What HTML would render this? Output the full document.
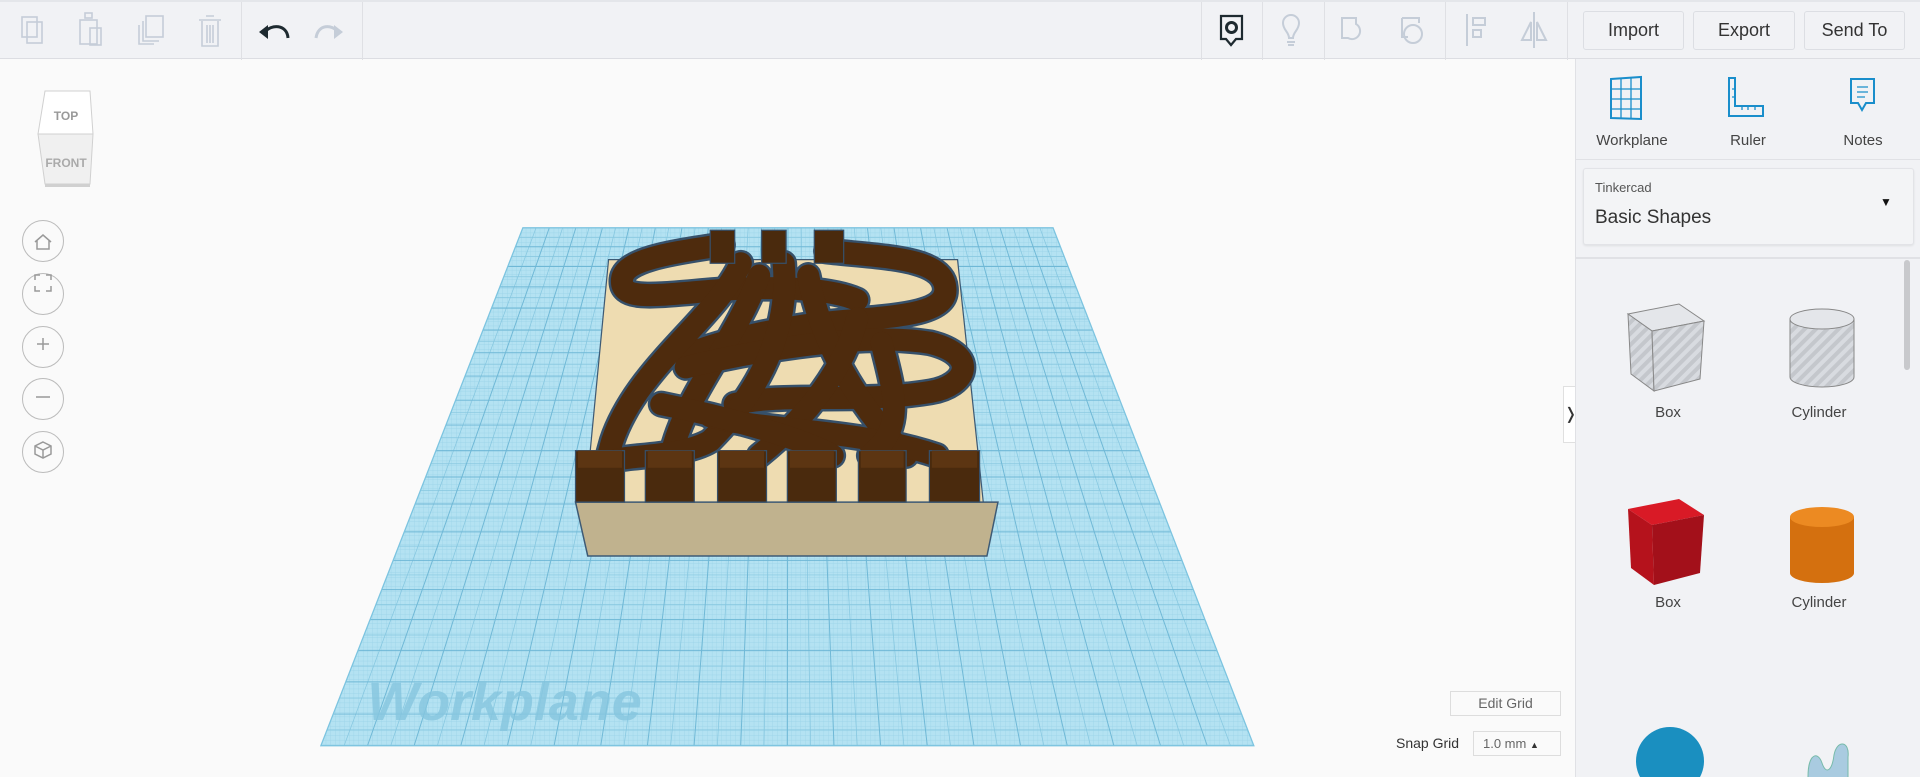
<!DOCTYPE html>
<html><head><meta charset="utf-8">
<style>
*{box-sizing:border-box;margin:0;padding:0}
body{width:1920px;height:777px;overflow:hidden;background:#fafafa;font-family:"Liberation Sans",sans-serif;position:relative}
#scene{position:absolute;left:0;top:0;width:1920px;height:777px}
#tb{position:absolute;left:0;top:0;width:1920px;height:59px;background:#f1f2f5;border-bottom:1px solid #dcdde2;border-top:2px solid #e4e6ea}
.sep{position:absolute;top:0;height:58px;width:1px;background:#dfe0e4}
.btn{position:absolute;top:9px;height:39px;border:1px solid #dcdee3;border-radius:3px;background:#f1f2f5;font-size:18px;color:#333;text-align:center;line-height:37px}
#panel{position:absolute;left:1575px;top:59px;width:345px;height:718px;background:#f1f2f5;border-left:1px solid #e0e1e5}
.lbl{position:absolute;font-size:15px;color:#444;text-align:center;width:120px}
.cb{position:absolute;left:22px;width:42px;height:42px;border:1px solid #bbb;border-radius:50%;background:#fafafa}
</style></head><body>

<svg id="scene" viewBox="0 0 1568 634.5" preserveAspectRatio="none">
<defs>
<clipPath id="wp"><polygon points="427,186 860,186 1024,609 262,609"/></clipPath>
<pattern id="fine" width="3.8" height="3.8" patternUnits="userSpaceOnUse"><path d="M0 0H3.8M0 0V3.8" stroke="#8fcde4" stroke-width="0.5" fill="none"/></pattern>
</defs>
<polygon points="427,186 860,186 1024,609 262,609" fill="#b4e2f2"/>
<polygon points="427,186 860,186 1024,609 262,609" fill="url(#fine)" opacity="0.8"/>
<g clip-path="url(#wp)" stroke="#86c7e0" stroke-width="0.6">
<path d="M200 193.7H1100M200 209.5H1100M200 226H1100M200 243H1100M200 260.5H1100M200 278.7H1100M200 297.5H1100M200 317H1100M200 337H1100M200 357.5H1100M200 378.7H1100M200 400.5H1100M200 423H1100M200 446H1100M200 469.5H1100M200 493.7H1100M200 518.5H1100M200 544H1100M200 570H1100M200 596H1100"/>
<path d="M437.8 186L281 609M459.5 186L319.1 609M481.1 186L357.2 609M502.8 186L395.3 609M524.4 186L433.4 609M546.1 186L471.5 609M567.7 186L509.6 609M589.4 186L547.7 609M611 186L585.8 609M632.7 186L623.9 609M654.3 186L662 609M676 186L700.1 609M697.6 186L738.2 609M719.3 186L776.3 609M740.9 186L814.4 609M762.6 186L852.5 609M784.2 186L890.6 609M805.9 186L928.7 609M827.5 186L966.8 609M849.2 186L1004.9 609"/>
</g>
<g clip-path="url(#wp)" stroke="#6fb8d6" stroke-width="0.8">
<path d="M200 186H1100M200 201.5H1100M200 217.6H1100M200 234.3H1100M200 251.6H1100M200 269.5H1100M200 288H1100M200 307.1H1100M200 326.8H1100M200 347.1H1100M200 368H1100M200 389.5H1100M200 411.6H1100M200 434.3H1100M200 457.6H1100M200 481.5H1100M200 506H1100M200 531.1H1100M200 556.8H1100M200 583.1H1100M200 609H1100"/>
<path d="M427 186L262 609M448.6 186L300.1 609M470.3 186L338.2 609M492 186L376.3 609M513.6 186L414.4 609M535.2 186L452.5 609M556.9 186L490.6 609M578.5 186L528.7 609M600.2 186L566.8 609M621.8 186L604.9 609M643.5 186L643 609M665.1 186L681.1 609M686.8 186L719.2 609M708.4 186L757.3 609M730.1 186L795.4 609M751.7 186L833.5 609M773.4 186L871.6 609M795 186L909.7 609M816.7 186L947.8 609M838.3 186L985.9 609M860 186L1024 609"/>
</g>
<polygon points="427,186 860,186 1024,609 262,609" fill="none" stroke="#7cc4e0" stroke-width="1"/>
<text x="300" y="588" font-family="Liberation Sans" font-weight="bold" font-style="italic" font-size="44" fill="#86c6df" opacity="0.8">Workplane</text>

<polygon points="497,212 782,212 803,410 478,410" fill="#eedcb1" stroke="#3d5a75" stroke-width="1"/>
<polygon points="470,410 815,410 806,454 480,454" fill="#c0b28e" stroke="#3d5a75" stroke-width="1.2"/>

<g fill="none" stroke-linecap="round" stroke-linejoin="round">
<g stroke="#36506a" stroke-width="22">
<path d="M590 200C560 205 510 210 508 228C506 248 540 240 600 236C640 234 680 236 700 245"/>
<path d="M675 205C720 210 770 210 772 235C774 255 740 258 690 262C640 266 590 278 560 290"/>
<path d="M605 215C585 260 520 300 500 360L495 378"/>
<path d="M620 225C600 280 560 320 548 372"/>
<path d="M560 300C600 290 700 270 760 280C800 290 790 315 760 320C700 330 640 320 600 330"/>
<path d="M640 215C645 270 620 320 580 360C560 372 520 372 505 375"/>
<path d="M660 225C670 280 700 330 740 372"/>
<path d="M700 260C690 300 660 340 620 372"/>
<path d="M580 340C620 352 700 350 765 372"/>
<path d="M540 330C600 342 660 360 680 372"/>
<path d="M720 280C730 320 740 350 710 372"/>
</g>
<g stroke="#4e2b0d" stroke-width="18">
<path d="M590 200C560 205 510 210 508 228C506 248 540 240 600 236C640 234 680 236 700 245"/>
<path d="M675 205C720 210 770 210 772 235C774 255 740 258 690 262C640 266 590 278 560 290"/>
<path d="M605 215C585 260 520 300 500 360L495 378"/>
<path d="M620 225C600 280 560 320 548 372"/>
<path d="M560 300C600 290 700 270 760 280C800 290 790 315 760 320C700 330 640 320 600 330"/>
<path d="M640 215C645 270 620 320 580 360C560 372 520 372 505 375"/>
<path d="M660 225C670 280 700 330 740 372"/>
<path d="M700 260C690 300 660 340 620 372"/>
<path d="M580 340C620 352 700 350 765 372"/>
<path d="M540 330C600 342 660 360 680 372"/>
<path d="M720 280C730 320 740 350 710 372"/>
</g>
</g>
<g fill="#4a2a0d" stroke="#36506a" stroke-width="1">
<rect x="580" y="188" width="20" height="27"/><rect x="622" y="188" width="20" height="27"/><rect x="665" y="188" width="24" height="27"/>
<rect x="470" y="368" width="40" height="42"/><rect x="527" y="368" width="40" height="42"/><rect x="586" y="368" width="40" height="42"/>
<rect x="643" y="368" width="40" height="42"/><rect x="701" y="368" width="39" height="42"/><rect x="759" y="368" width="41" height="42"/>
</g>
<g fill="#5c3512"><rect x="472" y="368" width="36" height="14"/><rect x="529" y="368" width="36" height="14"/><rect x="588" y="368" width="36" height="14"/><rect x="645" y="368" width="36" height="14"/><rect x="703" y="368" width="35" height="14"/><rect x="761" y="368" width="37" height="14"/></g>
</svg>

<div id="tb">
<svg style="position:absolute;left:0;top:0" width="380" height="58" fill="none" stroke="#c5cdd8" stroke-width="1.6">
<rect x="22" y="15" width="15" height="20"/><rect x="27" y="20" width="15" height="21"/>
<rect x="80" y="18" width="17" height="24"/><rect x="85" y="11" width="7" height="5"/><rect x="90" y="26" width="11" height="17"/>
<rect x="146" y="14" width="17" height="21"/><path d="M143 19v20h16M139 23v19h15"/>
<path d="M199 18h22M206 14h8M202 19v25h16v-25M207 23v18M210 23v18M213 23v18"/>
<path d="M265 30c6-8 22-8 23 6" stroke="#1e2a30" stroke-width="3"/><path d="M259 30l9-7v14z" fill="#1e2a30" stroke="none"/>
<path d="M338 30c-6-8-20-8-22 6" stroke-width="3"/><path d="M343 30l-9-7v14z" fill="#c5cdd8" stroke="none"/>
</svg>
<div class="sep" style="left:241px"></div><div class="sep" style="left:362px"></div>
<div class="sep" style="left:1201px"></div><div class="sep" style="left:1262px"></div><div class="sep" style="left:1324px"></div><div class="sep" style="left:1445px"></div><div class="sep" style="left:1567px"></div>
<svg style="position:absolute;left:1201px;top:0" width="370" height="58" fill="none" stroke="#c5cdd8" stroke-width="2">
<path d="M20 14h21v23h-6l-5 6-5-6h-5z" stroke="#1e2a30" stroke-width="2.2"/><circle cx="30.5" cy="25.5" r="5" stroke="#1e2a30" stroke-width="3"/>
<path d="M88 36c0-6-6-8-6-15a8 8 0 0 1 16 0c0 7-6 9-6 15zM86 40h8M87 43h6"/>
<path d="M141 16h14v6a8 8 0 1 1-8 14h-6z"/>
<path d="M201 16h17v5M201 16v19h6"/><circle cx="212" cy="32" r="9"/>
<path d="M266 12v32M272 16h12v7h-12zM272 28h8v7h-8z"/>
<path d="M333 10v36M330 20l-9 18h9zM336 20l9 18h-9z"/>
</svg>
<div class="btn" style="left:1583px;width:101px">Import</div>
<div class="btn" style="left:1693px;width:102px">Export</div>
<div class="btn" style="left:1804px;width:101px">Send To</div>
</div>

<svg style="position:absolute;left:35px;top:88px" width="90" height="105">
<path d="M10 3h45l3 43H3z" fill="#fff" stroke="#d0d0d0"/>
<path d="M3 46h55l-3 50H10z" fill="#f0f0f0" stroke="#d0d0d0"/>
<rect x="10" y="96" width="45" height="3" fill="#d0d0d0"/>
<text x="31" y="32" text-anchor="middle" font-size="12" font-weight="bold" fill="#999" font-family="Liberation Sans">TOP</text>
<text x="31" y="79" text-anchor="middle" font-size="12" font-weight="bold" fill="#aaa" font-family="Liberation Sans">FRONT</text>
</svg>
<div class="cb" style="top:220px"></div><div class="cb" style="top:273px"></div><div class="cb" style="top:326px"></div><div class="cb" style="top:378px"></div><div class="cb" style="top:431px"></div>
<svg style="position:absolute;left:22px;top:220px" width="42" height="260" fill="none" stroke="#999" stroke-width="1.5">
<path d="M13 22l8-7 8 7M15 20v9h12v-9"/>
<path d="M13 60v-5h5M24 55h5v5M29 66v5h-5M18 71h-5v-5"/>
<path d="M21 118v12M15 124h12"/>
<path d="M14 177h14"/>
<path d="M21 222l8 4v8l-8 4-8-4v-8zM13 226l8 4 8-4M21 230v8"/>
</svg>

<div style="position:absolute;left:1563px;top:386px;width:13px;height:57px;background:#fff;border:1px solid #e0e0e0;border-right:none;font-size:16px;line-height:55px;color:#333;text-align:center">❭</div>

<div style="position:absolute;left:1450px;top:691px;width:111px;height:25px;border:1px solid #ddd;background:#fafafa;font-size:14px;color:#666;text-align:center;line-height:23px">Edit Grid</div>
<div style="position:absolute;left:1396px;top:735px;font-size:14px;color:#333">Snap Grid</div>
<div style="position:absolute;left:1473px;top:731px;width:88px;height:25px;border:1px solid #ddd;background:#fafafa;font-size:13px;color:#666;line-height:23px;padding-left:9px">1.0 mm <span style="font-size:9px;color:#333">▲</span></div>

<div id="panel">
<svg style="position:absolute;left:0;top:0" width="345" height="70" fill="none" stroke="#1a8ecb" stroke-width="2">
<path d="M35 20l30-2v42l-30-1z"/><path d="M35 30h30M35 40h30M35 50h30M45 19v40M55 18v41" stroke-width="1.3"/>
<path d="M153 19h6v28h28v10h-34z"/><path d="M159 30h-3M159 38h-3M166 47v4M172 47v4M179 47v4" stroke-width="1.3"/>
<path d="M275 20h23v24h-8l-4 7-4-7h-7z"/><path d="M281 28h11M281 33h11M281 38h8" stroke-width="1.3"/>
</svg>
<div class="lbl" style="left:-4px;top:73px">Workplane</div>
<div class="lbl" style="left:112px;top:73px">Ruler</div>
<div class="lbl" style="left:227px;top:73px">Notes</div>
<div style="position:absolute;left:0;top:100px;width:345px;height:1px;background:#e0e1e5"></div>
<div style="position:absolute;left:7px;top:109px;width:331px;height:77px;background:#f3f4f6;border:1px solid #e2e3e7;border-radius:3px;box-shadow:0 1px 2px rgba(0,0,0,.08)">
<div style="position:absolute;left:11px;top:11px;font-size:13px;color:#555">Tinkercad</div>
<div style="position:absolute;left:11px;top:38px;font-size:19px;color:#333">Basic Shapes</div>
<div style="position:absolute;left:296px;top:26px;font-size:12px;color:#111">▼</div>
</div>
<div style="position:absolute;left:0;top:198px;width:345px;height:2px;background:#e0e1e5"></div>
<div style="position:absolute;left:328px;top:201px;width:6px;height:110px;background:#c8c9cc;border-radius:3px"></div>
<svg style="position:absolute;left:0;top:230px" width="320" height="488">
<defs><pattern id="st" width="8" height="8" patternUnits="userSpaceOnUse" patternTransform="rotate(45)"><rect width="8" height="8" fill="#c4c7cc"/><rect width="4" height="8" fill="#d8dbe0"/></pattern></defs>
<polygon points="52,25 103,15 128,32 76,42" fill="#e4e6ea" stroke="#888"/>
<polygon points="52,25 76,42 78,102 55,85" fill="url(#st)" stroke="#888"/>
<polygon points="76,42 128,32 124,90 78,102" fill="url(#st)" stroke="#888"/>
<path d="M214 30v58a32 10 0 0 0 64 0v-58" fill="url(#st)" stroke="#888"/>
<ellipse cx="246" cy="30" rx="32" ry="10" fill="#e4e6ea" stroke="#888"/>
<polygon points="52,220 103,210 128,226 76,236" fill="#d91a26"/>
<polygon points="52,220 76,236 78,296 55,279" fill="#b5121c"/>
<polygon points="76,236 128,226 124,284 78,296" fill="#a3101a"/>
<path d="M214 228v56a32 10 0 0 0 64 0v-56" fill="#d4700f"/>
<ellipse cx="246" cy="228" rx="32" ry="10" fill="#ec8a22"/>
<circle cx="94" cy="472" r="34" fill="#1a8fc0"/>
<path d="M232 488c0-24 10-26 14-14 4 12 10 8 12-8 3-16 16-14 14 2v32h-40z" fill="#a9cbe0" stroke="#7ba"/>
</svg>
<div class="lbl" style="left:32px;top:345px">Box</div>
<div class="lbl" style="left:183px;top:345px">Cylinder</div>
<div class="lbl" style="left:32px;top:535px">Box</div>
<div class="lbl" style="left:183px;top:535px">Cylinder</div>
</div>
</body></html>
